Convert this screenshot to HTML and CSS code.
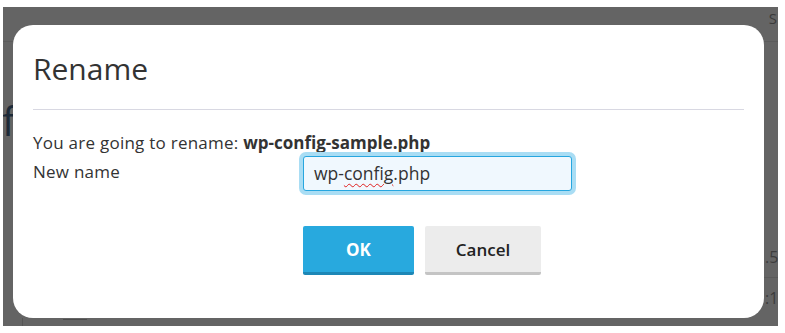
FILE: index.html
```html
<!DOCTYPE html>
<html lang="en">
<head>
    <meta charset="UTF-8">
    <meta name="viewport" content="width=device-width, initial-scale=1.0">
    <title>Rename</title>
    <link rel="stylesheet" href="styles.css">
</head>
<body>
    <div class="page">
        <!-- dimmed file manager behind the modal -->
        <div class="app">
            <div class="app-header"><span class="app-user">S</span></div>
            <div class="app-title">f</div>
            <div class="app-rows">
                <div class="app-row">.5</div>
                <div class="app-row">:1</div>
            </div>
            <div class="app-footer">
                <span class="app-sep"></span>
                <span class="app-chip"></span>
            </div>
        </div>

        <div class="dialog">
            <h1 class="dialog-title">Rename</h1>
            <div class="dialog-body">
                <p class="info">You are going to rename: <b>wp-config-sample.php</b></p>
                <div class="field">
                    <label class="field-label">New name</label>
                    <div class="field-input">wp-<span class="typo">config</span>.php</div>
                </div>
                <div class="actions">
                    <button class="btn btn-ok">OK</button>
                    <button class="btn btn-cancel">Cancel</button>
                </div>
            </div>
        </div>
    </div>
</body>
</html>
```

FILE: styles.css
```css
body {
    margin: 0;
    background-color: #fff;
    font-family: "Open Sans", "Liberation Sans", sans-serif;
    color: #333;
}

.page {
    position: relative;
    margin: 7px 7px 7px 3px;
    height: 319px;
    background-color: #646464;
    overflow: hidden;
}

/* background page, seen through the overlay */
.app {
    height: 100%;
    display: flex;
    flex-direction: column;
}

.app-header {
    height: 40px;
    border-bottom: 1px solid #5b5b5b;
    display: flex;
    justify-content: flex-end;
}

.app-user {
    font-size: 15px;
    line-height: 22px;
    color: #3a3a3a;
    margin-right: 1px;
}

.app-title {
    font-size: 40px;
    line-height: 42px;
    color: #1d2a38;
    margin-top: 58px;
    margin-left: -1px;
}

.app-rows {
    align-self: flex-end;
    width: 15px;
    margin-top: 95px;
}

.app-row {
    font-size: 16px;
    color: #3c3c3c;
    height: 40px;
    line-height: 40px;
    padding-left: 2px;
}

.app-row + .app-row {
    border-top: 1px solid #5a5a5a;
}

.app-footer {
    margin-top: auto;
    height: 8px;
    display: flex;
    align-items: flex-start;
    gap: 40px;
}

.app-sep {
    width: 1px;
    height: 8px;
    margin-left: 19px;
    background-color: #555;
}

.app-chip {
    width: 24px;
    height: 1px;
    margin-top: 1px;
    background-color: #4c4c4c;
}

/* modal */
.dialog {
    position: absolute;
    left: 10px;
    top: 18px;
    width: 751px;
    height: 293px;
    background-color: #fff;
    border-radius: 20px;
    box-sizing: border-box;
    padding: 0 20px;
}

.dialog-title {
    margin: 0;
    padding: 21px 0 17px;
    font-size: 30px;
    font-weight: 400;
    line-height: 46px;
    color: #333;
    border-bottom: 1px solid #d8d8e2;
}

.dialog-body {
    padding-top: 21px;
    font-size: 17px;
}

.info {
    margin: 0;
    line-height: 24px;
    letter-spacing: 0.25px;
}

.info b {
    font-weight: 700;
    letter-spacing: 0;
}

.field {
    display: grid;
    grid-template-columns: 270px 269px;
    align-items: start;
    margin-top: 1px;
}

.field-label {
    line-height: 24px;
    margin-top: 4px;
    letter-spacing: 0.25px;
}

.field-input {
    height: 35px;
    box-sizing: border-box;
    border: 1px solid #27a6df;
    border-radius: 3px;
    background-color: #f0f8fe;
    box-shadow: 0 0 0 4px #a9ddf4;
    padding: 0 10px;
    font-size: 17.5px;
    line-height: 33px;
    color: #333;
}

.typo {
    text-decoration: underline wavy #e0201f;
    text-decoration-thickness: 1px;
    text-underline-offset: 3px;
}

.actions {
    display: flex;
    gap: 11px;
    padding-left: 270px;
    margin-top: 35px;
}

.btn {
    height: 49px;
    border: none;
    border-radius: 2px;
    font-family: inherit;
    font-size: 17px;
    font-weight: 600;
    cursor: pointer;
}

.btn-ok {
    width: 111px;
    background-color: #28a9de;
    border-bottom: 3px solid #1d87b6;
    color: #fff;
    font-weight: 700;
}

.btn-cancel {
    width: 116px;
    background-color: #ececec;
    border-bottom: 3px solid #c4c4c4;
    color: #222;
}
```
